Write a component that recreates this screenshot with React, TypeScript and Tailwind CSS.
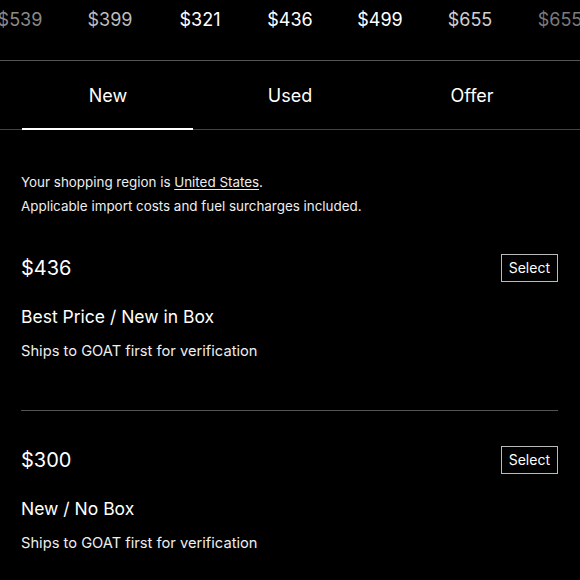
const prices = [
  { v: "$539", c: "text-[#8a8a8a]" },
  { v: "$399", c: "text-[#bdbdbd]" },
  { v: "$321", c: "text-white" },
  { v: "$436", c: "text-white" },
  { v: "$499", c: "text-white" },
  { v: "$655", c: "text-[#cfcfcf]" },
  { v: "$655", c: "text-[#7a7a7a]" },
];

const offers = [
  { price: "$436", title: "Best Price / New in Box", note: "Ships to GOAT first for verification" },
  { price: "$300", title: "New / No Box", note: "Ships to GOAT first for verification" },
];

export default function App() {
  return (
    <div
      className="w-[580px] h-[580px] overflow-hidden bg-black text-white"
      style={{ fontFamily: "Inter, 'Noto Sans', sans-serif" }}
    >
      {/* price strip */}
      <div className="h-[61px] overflow-hidden border-b border-[#555]">
        <div className="flex -ml-[25px] pt-[8px]">
          {prices.map((p, i) => (
            <div key={i} className={`w-[90px] shrink-0 text-center text-[18px] leading-[24px] ${p.c}`}>
              {p.v}
            </div>
          ))}
        </div>
      </div>

      {/* tabs */}
      <div className="flex px-[17px] border-b border-[#444] h-[69px]">
        {["New", "Used", "Offer"].map((t, i) => (
          <div key={t} className="w-[182px] flex flex-col">
            <div className="flex-1 flex items-center justify-center text-[18px] pt-[2px]">{t}</div>
            <div className={`h-[2px] -mb-px ml-[5px] mr-[6px] ${i === 0 ? "bg-white" : ""}`} />
          </div>
        ))}
      </div>

      <div className="pl-[21px] pr-[22px]">
        <div className="pt-[40px] text-[13.4px] leading-[24px] text-[#eee]">
          <p>
            Your shopping region is <span className="underline underline-offset-2">United States</span>.
          </p>
          <p>Applicable import costs and fuel surcharges included.</p>
        </div>

        {offers.map((o, i) => (
          <div key={i} className={i === 0 ? "pt-[36px] pb-[48px] border-b border-[#555]" : "pt-[35px]"}>
            <div className="flex items-center justify-between">
              <div className="text-[20px] leading-[28px]">{o.price}</div>
              <button className="h-[28px] px-[7px] border border-[#bbb] text-[14px] leading-none">Select</button>
            </div>
            <div className="mt-[22px] text-[17.5px] leading-[26px]">{o.title}</div>
            <div className="mt-[10px] text-[14.7px] leading-[22px] text-[#eee]">{o.note}</div>
          </div>
        ))}
      </div>
    </div>
  );
}
